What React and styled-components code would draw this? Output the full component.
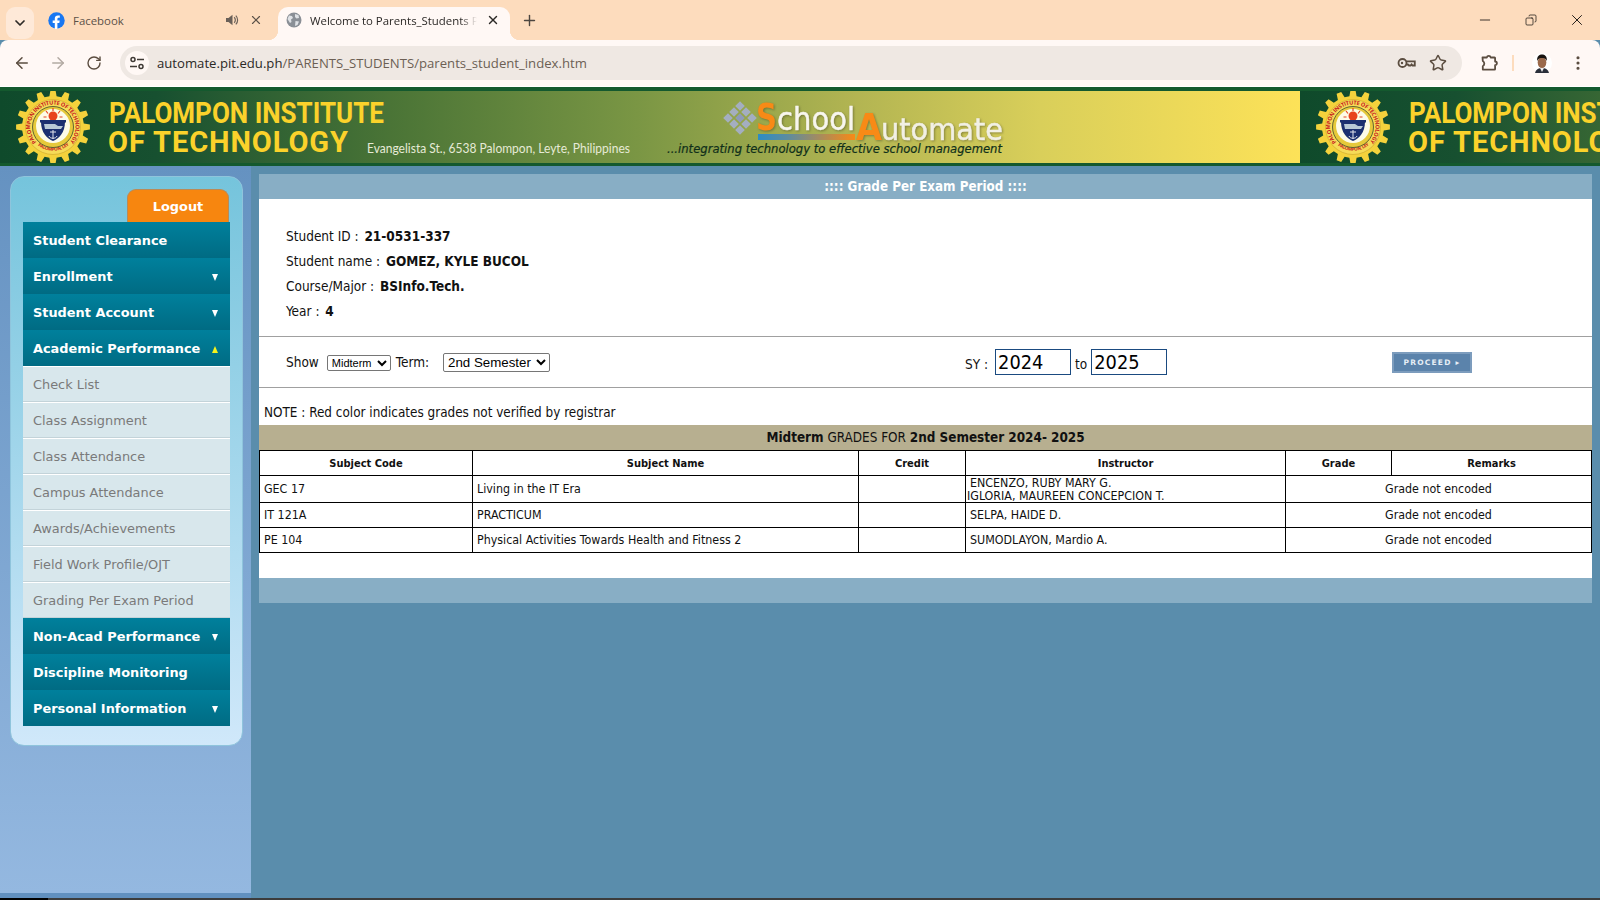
import React from "react";
import styled, { createGlobalStyle } from "styled-components";
import { ChevronDown, X, Plus, ArrowLeft, ArrowRight, RotateCw, Star, MoreVertical, Minus, Copy } from "lucide-react";

const Global = createGlobalStyle`
  html, body { margin: 0; padding: 0; height: 100%; overflow: hidden; }
  body { font-family: "DejaVu Sans", sans-serif; background: #5a8dac; }
  * { box-sizing: border-box; }
`;

const Page = styled.div`
  width: 1600px; height: 900px; display: flex; flex-direction: column; overflow: hidden;
`;

/* ---------- browser chrome ---------- */
const TabStrip = styled.div`
  height: 40px; background: #fddcbd; display: flex; align-items: flex-end; flex: none;
  padding-left: 6px; color: #4d4640;
`;
const TabListButton = styled.div`
  width: 28px; height: 32px; margin-bottom: 1px; border-radius: 9px; background: #fee9d8;
  display: flex; align-items: center; justify-content: center; color: #2d2a27;
`;
const Tab = styled.div`
  width: ${p => p.$w}px; height: 33px; margin-left: ${p => p.$ml}px; display: flex; align-items: center;
  padding: 0 ${p => (p.$active ? 9 : 14)}px 7px 8px;
  border-radius: 10px 10px 0 0; position: relative;
  background: ${p => (p.$active ? "#fff8f5" : "transparent")};
  font: 11.4px "Open Sans", sans-serif;
  color: ${p => (p.$active ? "#2b2826" : "#5b5148")};
  ${p => p.$active && `
    &::before, &::after {
      content: ""; position: absolute; bottom: 0; width: 10px; height: 10px;
    }
    &::before { left: -10px; background: radial-gradient(circle at 0 0, transparent 10px, #fff8f5 10.5px); }
    &::after { right: -10px; background: radial-gradient(circle at 100% 0, transparent 10px, #fff8f5 10.5px); }
  `}
`;
const TabTitle = styled.span`
  flex: 1; margin-left: 8px; white-space: nowrap; overflow: hidden;
  ${p => p.$fade && `-webkit-mask-image: linear-gradient(90deg, #000 90%, transparent 100%); mask-image: linear-gradient(90deg, #000 90%, transparent 100%);`}
`;
const TabAction = styled.span`
  display: flex; align-items: center; justify-content: center; width: 16px; margin-left: ${p => p.$ml || 0}px;
  color: ${p => p.$c || "#5b5148"};
`;
const NewTab = styled.div`
  width: 20px; height: 33px; margin-left: 9px; padding-bottom: 7px; display: flex; align-items: center; justify-content: center; color: #4d4640;
`;
const WindowControls = styled.div`
  margin-left: auto; height: 40px; display: flex; align-items: center; color: #0d0b0a;
`;
const WindowButton = styled.div`
  width: 46px; display: flex; align-items: center; justify-content: center;
`;
const Toolbar = styled.div`
  height: 47px; background: #fff8f5; flex: none; display: flex; align-items: center;
  border-radius: 8px 8px 0 0; padding: 0 0 1px 13px; color: #5b4d40;
  border-bottom: 1px solid #fff;
`;
const NavButton = styled.div`
  width: 18px; margin-right: 18px; display: flex; justify-content: center; color: ${p => p.$c || "#5b4d40"};
`;
const UrlBar = styled.div`
  width: 1342px; height: 34px; margin-left: -1px; border-radius: 17px; background: #efe8e3; display: flex; align-items: center;
  padding: 0 15px 0 5px; font: 13.15px "Open Sans", sans-serif; color: #6c5f54;
`;
const SiteInfo = styled.div`
  width: 24px; height: 24px; border-radius: 50%; background: #fff8f5; display: flex; align-items: center; justify-content: center;
  margin-right: 8px;
`;
const UrlHost = styled.span` color: #2b2826; `;
const UrlActions = styled.div` margin-left: auto; display: flex; align-items: center; gap: 13px; color: #5b4d40; `;
const ToolRight = styled.div` display: flex; align-items: center; color: #5b4d40; margin-left: 18px; `;
const Divider = styled.div` width: 2px; height: 16px; background: #fddcbd; margin: 0 18px 0 14px; `;
const Kebab = styled.div` margin-left: 17px; display: flex; `;

const FacebookIcon = () => (
  <svg width="17" height="17" viewBox="0 0 17 17">
    <circle cx="8.5" cy="8.5" r="8.2" fill="#1877f2" />
    <path d="M11.3 10.9l.4-2.4H9.4V7c0-.7.3-1.3 1.4-1.3h1V3.6s-1-.2-1.9-.2c-1.9 0-3.1 1.1-3.1 3.2v1.9H4.7v2.4h2.1V17h2.6v-6.1z" fill="#fff" />
  </svg>
);
const GlobeIcon = () => (
  <svg width="16" height="16" viewBox="0 0 16 16">
    <circle cx="8" cy="8" r="7.5" fill="#8a8f96" />
    <path d="M3 3.5l3 .5 1 2-2 1.5.5 2.5L4 11 1.5 7zM9 2l3.5 1L13 6l-2.5.5L9 5zM9.5 9l3.5.5-1.5 3.5L9 14z" fill="#dfe2e6" />
  </svg>
);
const SpeakerIcon = () => (
  <svg width="14" height="14" viewBox="0 0 14 14" fill="none">
    <path d="M1 5h2.5L7.5 1.8v10.4L3.5 9H1z" fill="#6a6058" />
    <path d="M9.2 4.2c1.5 1.4 1.5 4.2 0 5.6M10.8 2.6c2.4 2.3 2.4 6.5 0 8.8" stroke="#6a6058" strokeWidth="1.2" />
  </svg>
);
const SiteInfoIcon = () => (
  <svg width="16" height="16" viewBox="0 0 16 16" fill="none" stroke="#3f3a35" strokeWidth="1.5">
    <circle cx="4" cy="4.5" r="2" />
    <path d="M8 4.5h7M1 11.5h7" />
    <circle cx="12" cy="11.5" r="2" />
  </svg>
);
const KeyIcon = () => (
  <svg width="19" height="12" viewBox="0 0 19 12" fill="none" stroke="#5b4d40" strokeWidth="1.8">
    <circle cx="5.5" cy="6" r="4" />
    <path d="M9.5 4.3h8.3v4.2h-2.2l-1-1.2-1 1.2h-1.7l-1-1H9.6" />
    <circle cx="5" cy="6" r="1.2" fill="#5b4d40" stroke="none" />
  </svg>
);
const ExtensionIcon = () => (
  <svg width="18" height="18" viewBox="0 0 18 18" fill="none" stroke="#5b4d40" strokeWidth="1.8" strokeLinejoin="round">
    <path d="M2.5 3.5H6.8a2 2 0 0 1 3.9 0H14.5a.6.6 0 0 1 .6.6V7.5a1.8 1.8 0 0 1 0 3.6V15a.6.6 0 0 1-.6.6H2.8l0-3.4a3 3 0 0 0 0-5.2z" />
  </svg>
);
const AvatarIcon = () => (
  <svg width="20" height="20" viewBox="0 0 20 20">
    <circle cx="10" cy="10" r="10" fill="#fff" />
    <path d="M3 20c1-4 4-5 7-5s6 1 7 5z" fill="#2a2f3a" />
    <path d="M8 15l2 4 2-4z" fill="#eee" />
    <ellipse cx="10" cy="9.5" rx="4.3" ry="5.5" fill="#9a6a4c" />
    <path d="M5.2 8C4.6 3 7.5 1.5 10 1.5S15.4 3 14.8 8C14 5.5 12 5 10 5S6 5.5 5.2 8z" fill="#17120f" />
  </svg>
);

/* ---------- banner artwork (one tile of a repeating image) ---------- */
const gearPath = (cx, cy, ro, ri, n) => {
  const pts = [];
  for (let i = 0; i < n; i++) {
    const a = (i / n) * Math.PI * 2;
    const s = (Math.PI * 2) / n;
    [[-0.3, ri], [-0.17, ro], [0.17, ro], [0.3, ri]].forEach(([d, r]) => {
      pts.push(`${(cx + Math.cos(a + d * s) * r).toFixed(1)},${(cy + Math.sin(a + d * s) * r).toFixed(1)}`);
    });
  }
  return `M${pts.join("L")}Z`;
};

const Banner = styled.div`
  height: 79px; flex: none; display: flex; overflow: hidden; background: #fff;
  border-top: 4px solid #14592e; border-bottom: 3px solid #14592e;
`;
const Tile = styled.svg`
  flex: none; display: block; width: 1300px; height: 72px;
`;
const LogoText = styled.text`
  filter: drop-shadow(1px 1px 1px rgba(60, 60, 30, 0.45));
`;
const diamonds = [];
[-1, 0, 1].forEach(i => [-1, 0, 1].forEach(j => diamonds.push([(i - j) * 6, (i + j) * 6, i === 0 && j === 0])));

const BannerTile = () => (
  <Tile viewBox="0 0 1300 72">
    <defs>
      <linearGradient id="tileBg" x1="0" x2="1" y1="0" y2="0">
        <stop offset="0" stopColor="#0f4a2b" />
        <stop offset="0.12" stopColor="#175030" />
        <stop offset="0.3" stopColor="#4a7436" />
        <stop offset="0.49" stopColor="#7a9644" />
        <stop offset="0.66" stopColor="#b3b552" />
        <stop offset="0.8" stopColor="#d9cf5a" />
        <stop offset="1" stopColor="#fde258" />
      </linearGradient>
      <linearGradient id="bar" x1="0" x2="1" y1="0" y2="0">
        <stop offset="0" stopColor="#2c8cc4" />
        <stop offset="0.3" stopColor="#5c8ca0" />
        <stop offset="1" stopColor="#f88a16" />
      </linearGradient>
      <path id="ringTop" d="M37.1 51.9A22.5 22.5 0 1 1 68.9 51.9" />
      <path id="ringBottom" d="M37 54A25.5 25.5 0 0 0 69 54" />
    </defs>
    <rect width="1300" height="72" fill="url(#tileBg)" />
    <path d={gearPath(53, 36, 37, 31, 16)} fill="#f4d23c" />
    <circle cx="53" cy="36" r="27.5" fill="#f6db57" stroke="#c9a52a" strokeWidth="0.6" />
    <text fontFamily="Open Sans" fontWeight="700" fontSize="5.6" fill="#c8201c">
      <textPath href="#ringTop" startOffset="1%" textLength="103">PALOMPON INSTITUTE OF TECHNOLOGY</textPath>
    </text>
    <text fontFamily="Open Sans" fontWeight="700" fontSize="4.5" fill="#c8201c">
      <textPath href="#ringBottom" startOffset="3%" textLength="38">PALOMPON, LEYTE</textPath>
    </text>
    <circle cx="53" cy="36" r="20.5" fill="#e6c93a" stroke="#3e4a2c" strokeWidth="0.8" />
    <circle cx="53" cy="35" r="17" fill="#fdfbe8" />
    <circle cx="53" cy="25" r="4.5" fill="#e8421e" />
    <path d="M53 17v3M46 20l2 2.5M60 20l-2 2.5M43.5 26h3M59.5 26h3" stroke="#e8421e" strokeWidth="1.2" />
    <path d="M40 29h26v2.5H40z" fill="#1b2f70" />
    <path d="M41 31h24c0 10-6 17-12 19-6-2-12-9-12-19z" fill="#1b2f70" />
    <path d="M44 33h11l3 2h5l-2 3H45z" fill="#b7c8d6" />
    <path d="M53 39v9M50 41h6M49 45c1 3 7 3 8 0" stroke="#e4e6ec" strokeWidth="1" fill="none" />
    <text x="109" y="32" fontFamily="Roboto" fontWeight="700" fontSize="29" fill="#fbd22b" textLength="275" lengthAdjust="spacingAndGlyphs">PALOMPON INSTITUTE</text>
    <text x="108" y="61" fontFamily="Roboto" fontWeight="700" fontSize="29" fill="#fbd22b" textLength="240" lengthAdjust="spacing">OF TECHNOLOGY</text>
    <text x="367" y="62" fontFamily="Lato" fontSize="12.5" fill="#e6ead6" textLength="263" lengthAdjust="spacingAndGlyphs">Evangelista St., 6538 Palompon, Leyte, Philippines</text>
    {diamonds.map(([dx, dy, c], i) => (
      <path key={i} d={`M${740 + dx} ${27 + dy - 4.8}l4.8 4.8-4.8 4.8-4.8-4.8z`} fill={c ? "#8f9bb8" : "#a4aec0"} />
    ))}
    <rect x="758" y="43" width="97" height="6" fill="url(#bar)" />
    <LogoText x="756" y="39" fontFamily="DejaVu Sans" fontWeight="700" fontSize="38" fill="#f88a16" textLength="21" lengthAdjust="spacingAndGlyphs">S</LogoText>
    <LogoText x="777" y="39" fontFamily="DejaVu Sans" fontSize="32" fill="#f8f6ee" stroke="#f8f6ee" strokeWidth="0.5" textLength="78" lengthAdjust="spacingAndGlyphs">chool</LogoText>
    <LogoText x="856" y="49" fontFamily="DejaVu Sans" fontWeight="700" fontSize="37" fill="#f88a16" textLength="26" lengthAdjust="spacingAndGlyphs">A</LogoText>
    <LogoText x="881" y="49" fontFamily="DejaVu Sans" fontSize="30" fill="#f2f0e4" stroke="#f2f0e4" strokeWidth="0.5" textLength="122" lengthAdjust="spacingAndGlyphs">utomate</LogoText>
    <text x="667" y="62" fontFamily="DejaVu Sans" fontStyle="italic" fontSize="12" fill="#102f1a" stroke="#102f1a" strokeWidth="0.2" textLength="335" lengthAdjust="spacingAndGlyphs">...integrating technology to effective school management</text>
  </Tile>
);

/* ---------- page body ---------- */
const Body = styled.div`
  flex: 1; display: flex; min-height: 0; background: #5a8dac;
`;
const Sidebar = styled.aside`
  width: 251px; flex: none; padding: 10px 8px 0 10px;
  background: linear-gradient(180deg, #6592c1 0%, #94b8e0 100%);
  border-bottom: 5px solid #6190bf;
`;
const MenuPanel = styled.div`
  height: 570px; border-radius: 14px; padding: 12px 12px 0 12px;
  background: linear-gradient(180deg, #75c4dc 0%, #d0e8fa 100%);
  border: 1px solid #8fc4dc;
  display: flex; flex-direction: column;
`;
const LogoutTab = styled.div`
  align-self: flex-end; width: 102px; height: 33px; margin-right: 1px; display: flex; align-items: center; justify-content: center;
  background: #f7860f; border: 1px solid #b98a58; border-bottom: none; border-radius: 9px 9px 0 0;
  color: #fff; font: 700 12.9px "DejaVu Sans", sans-serif;
`;
const MenuItem = styled.div`
  height: 36px; display: flex; align-items: center; justify-content: space-between; padding: 0 12px 0 10px;
  background: linear-gradient(180deg, #00809c 0%, #006b83 100%);
  color: #fff; font: 700 12.9px "DejaVu Sans", sans-serif; white-space: nowrap;
`;
const Arrow = styled.i`
  width: 0; height: 0; border-left: 3.5px solid transparent; border-right: 3.5px solid transparent; margin-top: 2px;
  ${p => (p.$up ? "border-bottom: 7px solid #f7f21c;" : "border-top: 7px solid #fff;")}
`;
const SubItem = styled.div`
  height: 36px; display: flex; align-items: center; padding: 0 10px;
  background: #d8e7ec; border-top: 1px solid #fff; border-bottom: 1px solid #c3d3d9;
  color: #7a7a7a; font: 12.9px "DejaVu Sans", sans-serif; white-space: nowrap;
`;
const Main = styled.main`
  flex: 1; padding: 8px 8px 0 8px;
`;
const PanelBar = styled.div`
  height: 25px; background: #88aec5; color: #fff; display: flex; align-items: center; justify-content: center;
  font: 700 13.3px "DejaVu Sans", sans-serif; font-stretch: condensed;
`;
const Sheet = styled.div`
  background: #fff; height: 379px; padding-top: 25px; color: #111;
  font: 13.5px "DejaVu Sans", sans-serif; font-stretch: condensed;
`;
const InfoLine = styled.div`
  height: 25px; line-height: 25px; padding-left: 27px; b { font-weight: 700; margin-left: 2px; }
`;
const Rule = styled.hr`
  margin: ${p => p.$mt || 0}px 0 0; border: 0; border-top: 1px solid #a0a0a0; height: 0;
`;
const Controls = styled.div`
  height: 50px; display: grid; grid-template-columns: 706px 427px 1fr; align-items: center;
`;
const ShowGroup = styled.div` display: flex; align-items: center; padding-left: 27px; `;
const SelectSmall = styled.select`
  width: 64px; height: 16px; margin: 1px 0 0 8px; padding: 0; font: 11px "Liberation Sans", sans-serif; background: #fff; border: 1px solid #767676; border-radius: 2px; color: #000;
`;
const SelectLarge = styled.select`
  width: 107px; height: 19px; margin-left: 14px; padding: 0; font: 13.3px "Liberation Sans", sans-serif; background: #fff; border: 1px solid #767676; border-radius: 2px; color: #000;
`;
const TermLabel = styled.span` margin-left: 5px; `;
const SyGroup = styled.div` display: flex; align-items: center; `;
const SyLabel = styled.span` margin: 4px 7px 0 0; `;
const ToLabel = styled.span` margin: 4px 4px 0 4px; `;
const YearInput = styled.input`
  width: 76px; height: 26px; border: 1px solid #1a4a80; padding: 0 2px; color: #000; background: #fff; outline: none;
  font: 19.8px "DejaVu Sans", sans-serif; font-stretch: condensed;
`;
const ProceedButton = styled.div`
  width: 80px; height: 21px; margin-top: 1px; background: #5b83ab; border: 2px solid #7c9cbd; display: flex; align-items: center; justify-content: center;
  color: #e6eef6; font: 700 7.5px "DejaVu Sans", sans-serif; letter-spacing: 1.2px; font-variant: small-caps;
`;
const Note = styled.div`
  height: 37px; padding: 12px 0 0 5px; line-height: 26px; font-size: 13.4px;
`;
const TitleBar = styled.div`
  height: 25px; background: #b7af90; display: flex; align-items: center; justify-content: center; color: #111; font-size: 13.4px; white-space: pre;
  b { font-weight: 700; }
`;
const Grades = styled.table`
  width: 1333px; table-layout: fixed; border-collapse: collapse; font-size: 12.35px; color: #111;
  th, td { border: 1px solid #000; padding: 0 4px; }
  th { height: 25px; font-weight: 700; font-size: 11px; text-align: center; }
  td { height: 25px; line-height: 13px; padding-top: 1px; }
`;
const RemarkCell = styled.td` text-align: center; `;
const InstructorLine = styled.div`
  margin-left: ${p => p.$ml || 0}px;
  margin-bottom: ${p => (p.$ml ? -1 : 0)}px;
`;

const subMenu = ["Check List", "Class Assignment", "Class Attendance", "Campus Attendance", "Awards/Achievements", "Field Work Profile/OJT", "Grading Per Exam Period"];
const rows = [
  { code: "GEC 17", name: "Living in the IT Era", inst: ["ENCENZO, RUBY MARY G.", "IGLORIA, MAUREEN CONCEPCION T."] },
  { code: "IT 121A", name: "PRACTICUM", inst: ["SELPA, HAIDE D."] },
  { code: "PE 104", name: "Physical Activities Towards Health and Fitness 2", inst: ["SUMODLAYON, Mardio A."] },
];

const Taskbar = styled.div`
  height: 2px; flex: none; background: linear-gradient(90deg, #000 48px, #3c3c3c 48px);
`;

export default function App() {
  return (
    <Page>
      <Global />
      <TabStrip>
        <TabListButton><ChevronDown size={16} strokeWidth={2.6} /></TabListButton>
        <Tab $w={238} $ml={6}>
          <FacebookIcon />
          <TabTitle>Facebook</TabTitle>
          <TabAction><SpeakerIcon /></TabAction>
          <TabAction $ml={8}><X size={14} /></TabAction>
        </Tab>
        <Tab $w={232} $ml={0} $active>
          <GlobeIcon />
          <TabTitle $fade>Welcome to Parents_Students Portal</TabTitle>
          <TabAction $ml={8} $c="#2b2826"><X size={14} strokeWidth={2.4} /></TabAction>
        </Tab>
        <NewTab><Plus size={17} strokeWidth={2} /></NewTab>
        <WindowControls>
          <WindowButton><Minus size={16} strokeWidth={1.2} /></WindowButton>
          <WindowButton><Copy size={12} strokeWidth={1.4} style={{ transform: "scaleX(-1)" }} /></WindowButton>
          <WindowButton><X size={18} strokeWidth={1.2} /></WindowButton>
        </WindowControls>
      </TabStrip>
      <Toolbar>
        <NavButton><ArrowLeft size={18} strokeWidth={2} /></NavButton>
        <NavButton $c="#b3aaa3"><ArrowRight size={18} strokeWidth={2} /></NavButton>
        <NavButton><RotateCw size={16} strokeWidth={2.1} /></NavButton>
        <UrlBar>
          <SiteInfo><SiteInfoIcon /></SiteInfo>
          <UrlHost>automate.pit.edu.ph</UrlHost>/PARENTS_STUDENTS/parents_student_index.htm
          <UrlActions>
            <KeyIcon />
            <Star size={18} strokeWidth={2} />
          </UrlActions>
        </UrlBar>
        <ToolRight>
          <ExtensionIcon />
          <Divider />
          <AvatarIcon />
          <Kebab><MoreVertical size={18} strokeWidth={2.2} /></Kebab>
        </ToolRight>
      </Toolbar>
      <Banner>
        <BannerTile />
        <BannerTile />
      </Banner>
      <Body>
        <Sidebar>
          <MenuPanel>
            <LogoutTab>Logout</LogoutTab>
            <MenuItem>Student Clearance</MenuItem>
            <MenuItem>Enrollment<Arrow /></MenuItem>
            <MenuItem>Student Account<Arrow /></MenuItem>
            <MenuItem>Academic Performance<Arrow $up /></MenuItem>
            {subMenu.map(s => <SubItem key={s}>{s}</SubItem>)}
            <MenuItem>Non-Acad Performance<Arrow /></MenuItem>
            <MenuItem>Discipline Monitoring</MenuItem>
            <MenuItem>Personal Information<Arrow /></MenuItem>
          </MenuPanel>
        </Sidebar>
        <Main>
          <PanelBar>:::: Grade Per Exam Period ::::</PanelBar>
          <Sheet>
            <InfoLine>Student ID : <b>21-0531-337</b></InfoLine>
            <InfoLine>Student name : <b>GOMEZ, KYLE BUCOL</b></InfoLine>
            <InfoLine>Course/Major : <b>BSInfo.Tech.</b></InfoLine>
            <InfoLine>Year : <b>4</b></InfoLine>
            <Rule $mt={12} />
            <Controls>
              <ShowGroup>
                Show
                <SelectSmall defaultValue="Midterm"><option>Midterm</option></SelectSmall>
                <TermLabel>Term:</TermLabel>
                <SelectLarge defaultValue="2nd Semester"><option>2nd Semester</option></SelectLarge>
              </ShowGroup>
              <SyGroup>
                <SyLabel>SY :</SyLabel>
                <YearInput defaultValue="2024" />
                <ToLabel>to</ToLabel>
                <YearInput defaultValue="2025" />
              </SyGroup>
              <ProceedButton>PROCEED ▸</ProceedButton>
            </Controls>
            <Rule />
            <Note>NOTE : Red color indicates grades not verified by registrar</Note>
            <TitleBar><b>Midterm</b> GRADES FOR <b>2nd Semester 2024- 2025</b></TitleBar>
            <Grades>
              <colgroup>
                <col style={{ width: 213 }} />
                <col style={{ width: 386 }} />
                <col style={{ width: 107 }} />
                <col style={{ width: 320 }} />
                <col style={{ width: 106 }} />
                <col />
              </colgroup>
              <thead>
                <tr><th>Subject Code</th><th>Subject Name</th><th>Credit</th><th>Instructor</th><th>Grade</th><th>Remarks</th></tr>
              </thead>
              <tbody>
                {rows.map(r => (
                  <tr key={r.code}>
                    <td>{r.code}</td>
                    <td>{r.name}</td>
                    <td></td>
                    <td>{r.inst.map((n, i) => <InstructorLine key={n} $ml={i ? -3 : 0}>{n}</InstructorLine>)}</td>
                    <RemarkCell colSpan={2}>Grade not encoded</RemarkCell>
                  </tr>
                ))}
              </tbody>
            </Grades>
          </Sheet>
          <PanelBar />
        </Main>
      </Body>
      <Taskbar />
    </Page>
  );
}
